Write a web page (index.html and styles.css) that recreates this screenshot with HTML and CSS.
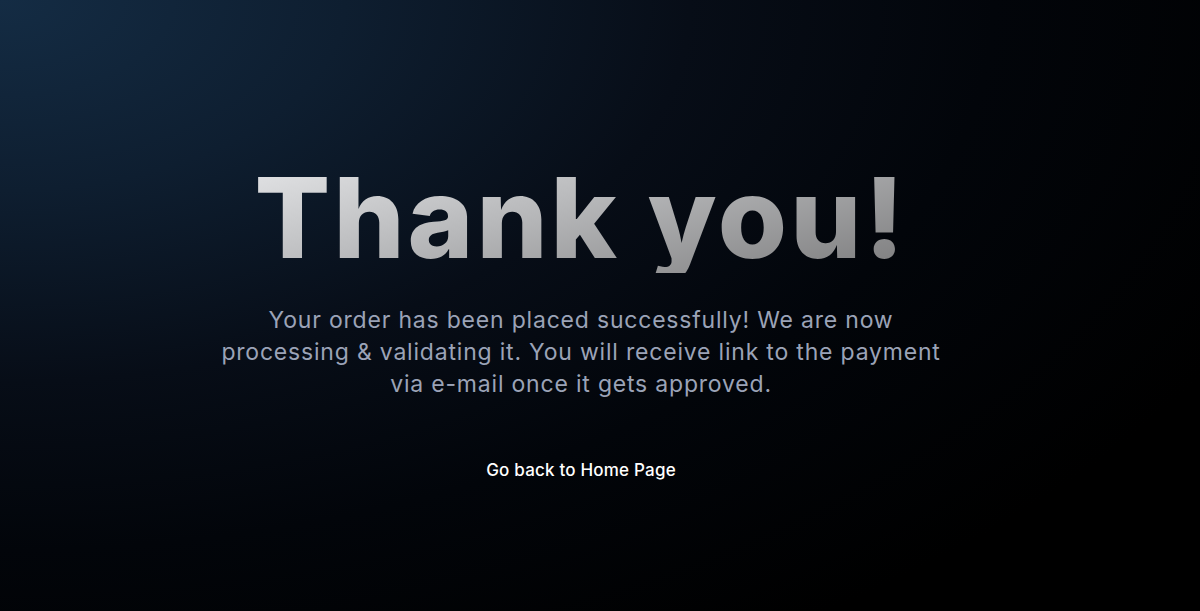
FILE: index.html
```html
<!DOCTYPE html>
<html lang="en">
<head>
<meta charset="utf-8">
<title>Thank you!</title>
<link rel="stylesheet" href="styles.css">
</head>
<body>
<main class="page">
  <section class="thanks">
    <h1 class="title">Thank you!</h1>
    <p class="message">Your order has been placed successfully! We are now<br>processing &amp; validating it. You will receive link to the payment<br>via e-mail once it gets approved.</p>
    <a class="home-link" href="#">Go back to Home Page</a>
  </section>
</main>
</body>
</html>
```

FILE: styles.css
```css
html, body {
  margin: 0;
  padding: 0;
  height: 100%;
}
body {
  background: #000;
  font-family: "Inter", "Open Sans", "Liberation Sans", sans-serif;
  overflow: hidden;
}
.page {
  height: 611px;
  background:
    radial-gradient(ellipse 115% 125% at 0% 0%, #142c44 0%, #0e1e30 25%, #070d17 50%, #02050a 72%, #000 100%);
  display: flex;
  justify-content: center;
  padding-right: 38px;
  box-sizing: border-box;
}
.thanks {
  display: flex;
  flex-direction: column;
  align-items: center;
  padding-top: 161px;
}
.title {
  margin: 0;
  font-size: 112px;
  font-weight: 800;
  line-height: 1;
  letter-spacing: 3px;
  background: linear-gradient(165deg, #e4e5e7 0%, #b6b7b9 45%, #7c7c7d 100%);
  -webkit-background-clip: text;
  background-clip: text;
  color: transparent;
}
.message {
  margin: 31px 0 0;
  font-size: 23px;
  line-height: 32px;
  font-weight: 400;
  letter-spacing: 0.8px;
  color: #9ba3b7;
  text-align: center;
}
.home-link {
  margin-top: 60px;
  font-size: 17px;
  font-weight: 500;
  letter-spacing: 0.2px;
  color: #ffffff;
  text-decoration: none;
}
```
